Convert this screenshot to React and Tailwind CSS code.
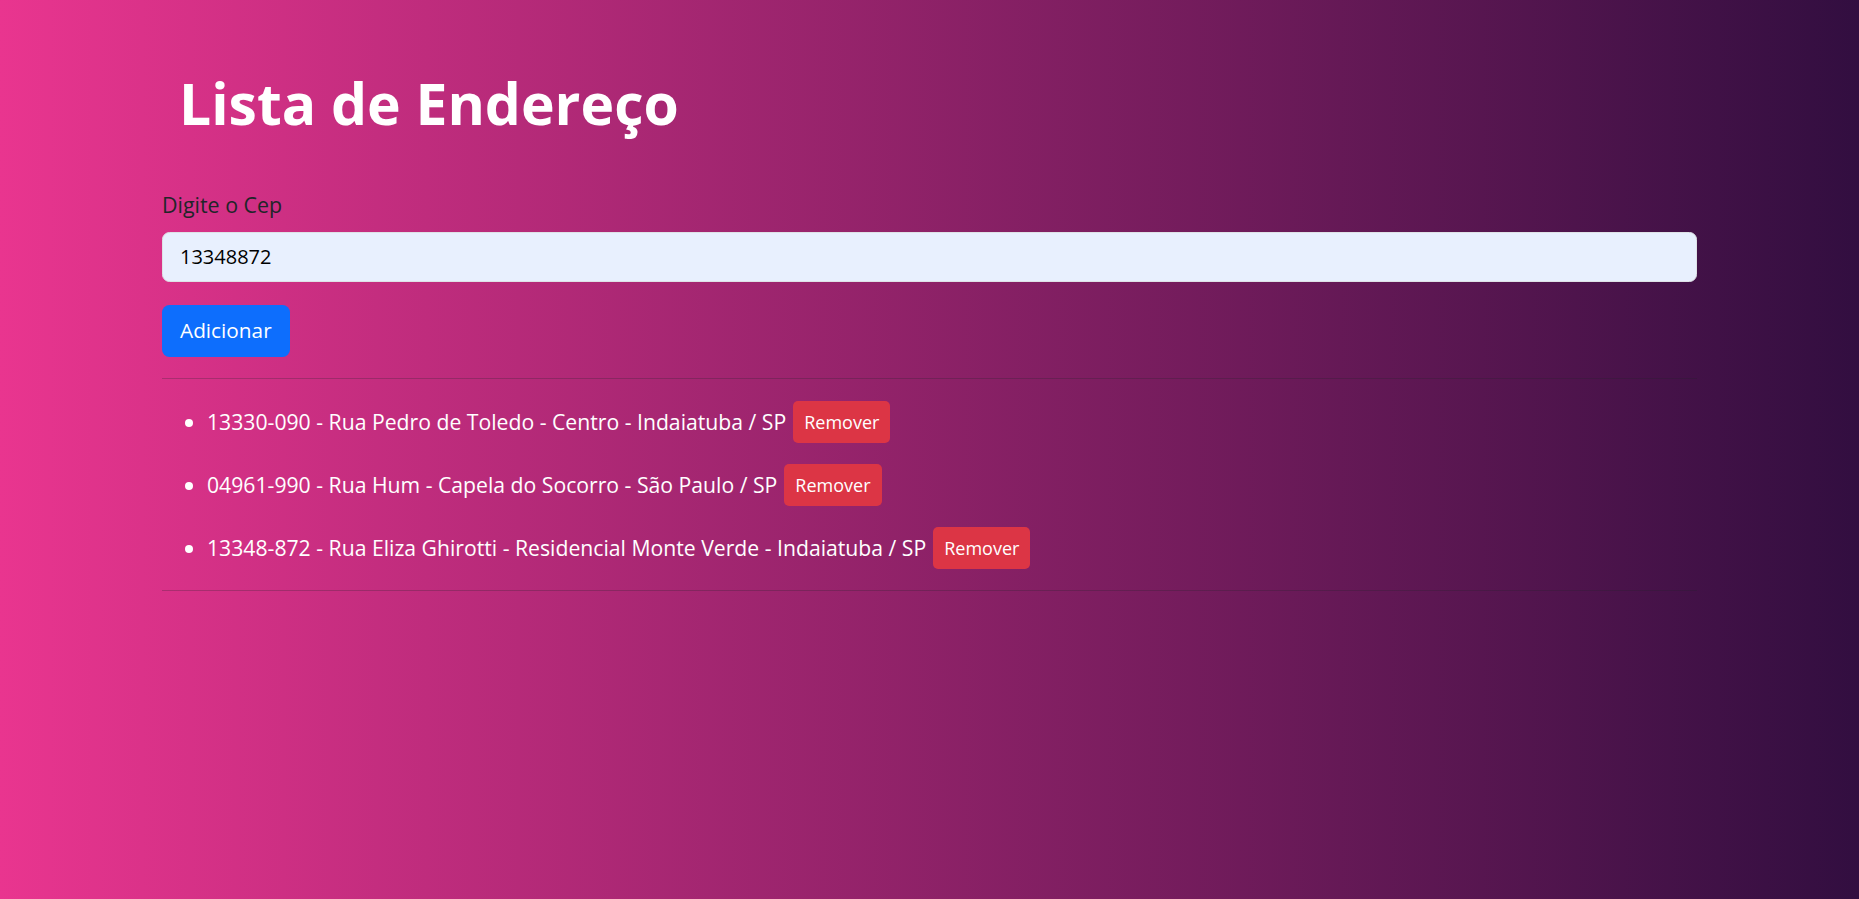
import React from "react";

const items = [
  "13330-090 - Rua Pedro de Toledo - Centro - Indaiatuba / SP",
  "04961-990 - Rua Hum - Capela do Socorro - São Paulo / SP",
  "13348-872 - Rua Eliza Ghirotti - Residencial Monte Verde - Indaiatuba / SP",
];

export default function App() {
  return (
    <div
      className="min-h-[899px] w-full bg-[linear-gradient(90deg,#e9358f_0%,#320e40_100%)] text-[20px] leading-[1.5] text-[#212529]"
      style={{ fontFamily: '"Open Sans", "Noto Sans", sans-serif' }}
    >
      <div className="mx-[162px] pt-[69px]">
        <h1 className="pl-[17px] text-[57px] font-bold leading-[1.2] text-white">
          Lista de Endereço
        </h1>
        <div className="mt-[52px]">
          <label className="mb-[10px] block text-[21.4px]">Digite o Cep</label>
          <input
            defaultValue="13348872"
            className="block h-[50px] w-full rounded-[7.5px] border border-[#dee2e6] bg-[#e8f0fe] px-[17px] text-[20px] text-black outline-none"
          />
          <button className="mt-[23px] h-[52px] rounded-[7.5px] bg-[#0d6efd] px-[18px] text-[20.8px] text-white">
            Adicionar
          </button>
        </div>
        <hr className="mt-[21px] border-t border-[#212529]/25" />
        <ul className="mt-[22px] list-disc pl-[45px] text-[21.2px] text-white">
          {items.map((t) => (
            <li key={t} className="mb-[21px] h-[42px] leading-[42px]">
              <span>{t}</span>
              <button className="ml-[7px] h-[42px] rounded-[5px] bg-[#dc3545] px-[11px] text-[18px] leading-[42px] text-white align-top">
                Remover
              </button>
            </li>
          ))}
        </ul>
        <hr className="border-t border-[#212529]/25" />
      </div>
    </div>
  );
}
